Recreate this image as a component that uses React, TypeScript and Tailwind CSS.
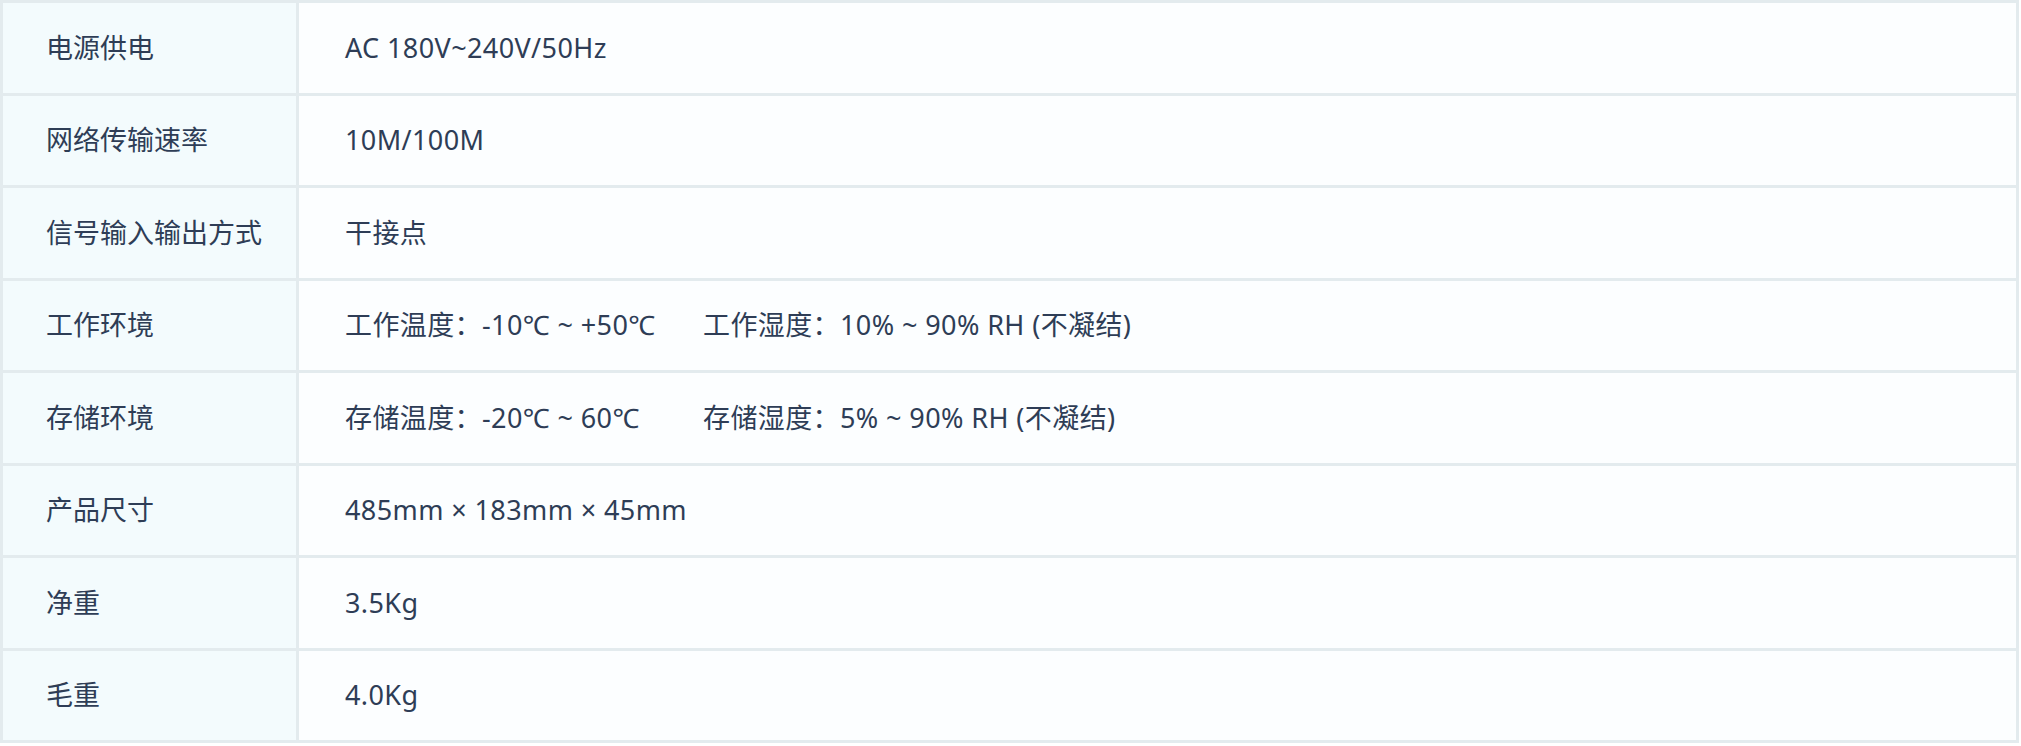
const rows: { label: string; value: React.ReactNode }[] = [
  { label: "电源供电", value: "AC 180V~240V/50Hz" },
  { label: "网络传输速率", value: "10M/100M" },
  { label: "信号输入输出方式", value: "干接点" },
  {
    label: "工作环境",
    value: (
      <>
        <span className="inline-block w-[358px]">工作温度：-10℃ ~ +50℃</span>
        <span>工作湿度：10% ~ 90% RH (不凝结)</span>
      </>
    ),
  },
  {
    label: "存储环境",
    value: (
      <>
        <span className="inline-block w-[358px]">存储温度：-20℃ ~ 60℃</span>
        <span>存储湿度：5% ~ 90% RH (不凝结)</span>
      </>
    ),
  },
  { label: "产品尺寸", value: "485mm × 183mm × 45mm" },
  { label: "净重", value: "3.5Kg" },
  { label: "毛重", value: "4.0Kg" },
];

export default function App() {
  return (
    <div className="min-h-screen bg-white">
      <div
        className="w-[2019px] border-t-[3px] border-l-[3px] border-[#e3ebee] text-[27px] text-[#2e3d56]"
        style={{ fontFamily: '"Noto Sans", "Noto Sans CJK SC", sans-serif' }}
      >
        {rows.map((row) => (
          <div key={row.label} className="flex h-[92.5px]">
            <div className="flex w-[296px] shrink-0 items-center border-r-[3px] border-b-[3px] border-[#e3ebee] bg-[#f3fbfd] pl-[43px]">
              {row.label}
            </div>
            <div className="flex flex-1 items-center border-r-[3px] border-b-[3px] border-[#e3ebee] bg-[#fcfeff] pl-[46px] tracking-[0.4px] whitespace-pre">
              {row.value}
            </div>
          </div>
        ))}
      </div>
    </div>
  );
}
